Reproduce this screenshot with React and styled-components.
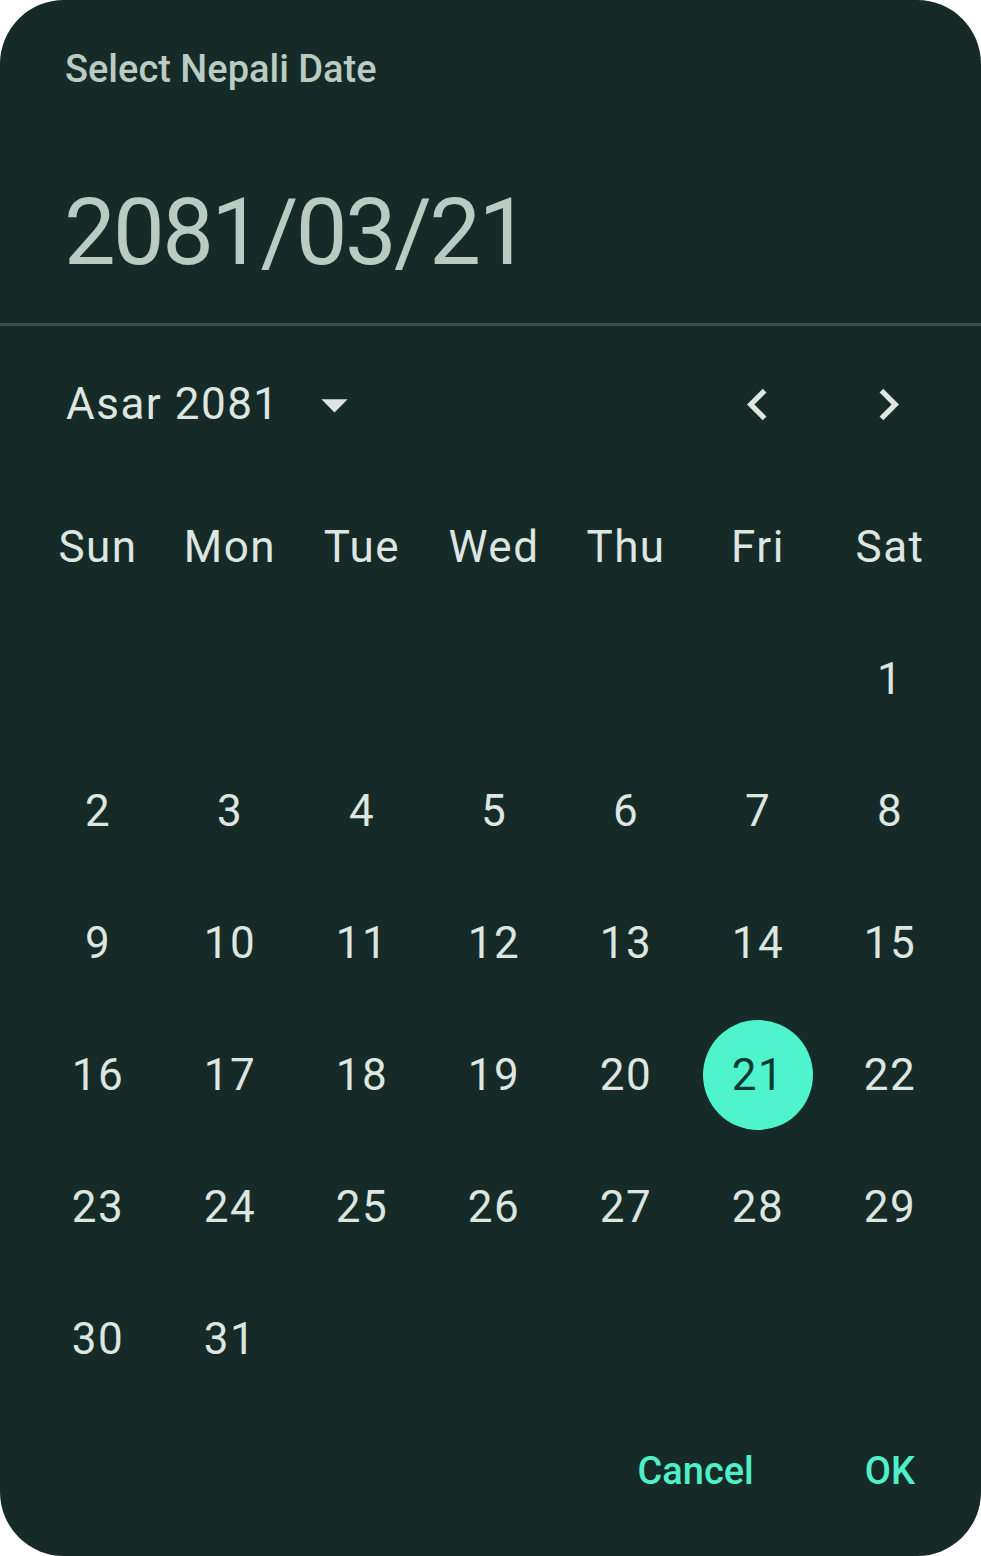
import React from "react";
import styled, { createGlobalStyle } from "styled-components";

const Global = createGlobalStyle`
  html, body { margin: 0; padding: 0; background: #ffffff; }
  body { font-family: Roboto, "Noto Sans", sans-serif; }
`;

const Card = styled.div`
  width: 981px;
  height: 1556px;
  background: #162b27;
  border-radius: 64px;
  display: flex;
  flex-direction: column;
  overflow: hidden;
  font-family: Roboto, "Noto Sans", sans-serif;
`;

const Header = styled.div`
  display: flex;
  flex-direction: column;
  padding: 46px 0 35px 65px;
`;

const Title = styled.div`
  font-size: 38px;
  line-height: 46px;
  font-weight: 500;
  color: #bacbc3;
`;

const BigDate = styled.div`
  margin-top: 86px;
  margin-left: -1px;
  font-size: 92px;
  line-height: 110px;
  font-weight: 400;
  letter-spacing: -2.6px;
  color: #bacbc3;
`;

const Divider = styled.div`
  height: 3px;
  background: #3c4d48;
`;

const MonthRow = styled.div`
  display: flex;
  align-items: center;
  height: 80px;
  margin-top: 38px;
  padding-left: 66px;
`;

const MonthLabel = styled.div`
  font-size: 44px;
  line-height: 52px;
  letter-spacing: 1.5px;
  color: #dde6e1;
`;

const IconBox = styled.div`
  width: 63px;
  height: 63px;
  display: flex;
  align-items: center;
  justify-content: center;
  margin-left: ${(p) => p.$ml || 0}px;
  svg { display: block; }
`;

const Spacer = styled.div`
  flex: ${(p) => (p.$fixed ? `0 0 ${p.$fixed}px` : "1")};
`;

const Grid = styled.div`
  display: grid;
  grid-template-columns: repeat(7, 132px);
  grid-auto-rows: 132px;
  margin-top: 37px;
  padding-left: 32px;
`;

const Cell = styled.div`
  display: flex;
  align-items: center;
  justify-content: center;
  font-size: 44px;
  letter-spacing: 1.5px;
  color: #dde6e1;
`;

const Day = styled.div`
  width: 110px;
  height: 110px;
  border-radius: 50%;
  display: flex;
  align-items: center;
  justify-content: center;
  background: ${(p) => (p.$selected ? "#4ff3cc" : "transparent")};
  color: ${(p) => (p.$selected ? "#0d3a30" : "#dde6e1")};
`;

const Footer = styled.div`
  display: flex;
  justify-content: flex-end;
  align-items: center;
  height: 132px;
  gap: 111px;
  padding-right: 66px;
`;

const TextButton = styled.button`
  background: none;
  border: none;
  padding: 0;
  font-family: Roboto, "Noto Sans", sans-serif;
  font-size: 38px;
  font-weight: 500;
  color: #4ff0c9;
  cursor: pointer;
`;

const Icon = ({ d }) => (
  <svg width="63" height="63" viewBox="0 0 24 24" fill="#dde6e1">
    <path d={d} />
  </svg>
);

const weekdays = ["Sun", "Mon", "Tue", "Wed", "Thu", "Fri", "Sat"];
const startOffset = 6;
const daysInMonth = 31;
const selected = 21;

export default function App() {
  const cells = [];
  for (let i = 0; i < startOffset; i++) cells.push(<Cell key={`e${i}`} />);
  for (let d = 1; d <= daysInMonth; d++) {
    cells.push(
      <Cell key={d}>
        <Day $selected={d === selected}>{d}</Day>
      </Cell>
    );
  }
  return (
    <>
      <Global />
      <Card>
        <Header>
          <Title>Select Nepali Date</Title>
          <BigDate>2081/03/21</BigDate>
        </Header>
        <Divider />
        <MonthRow>
          <MonthLabel>Asar 2081</MonthLabel>
          <IconBox $ml={23}>
            <Icon d="M7 10l5 5 5-5z" />
          </IconBox>
          <Spacer />
          <IconBox>
            <Icon d="M15.41 7.41L14 6l-6 6 6 6 1.41-1.41L10.83 12z" />
          </IconBox>
          <IconBox $ml={68}>
            <Icon d="M10 6L8.59 7.41 13.17 12l-4.58 4.59L10 18l6-6z" />
          </IconBox>
          <Spacer $fixed={61} />
        </MonthRow>
        <Grid>
          {weekdays.map((w) => (
            <Cell key={w}>{w}</Cell>
          ))}
          {cells}
        </Grid>
        <Footer>
          <TextButton>Cancel</TextButton>
          <TextButton>OK</TextButton>
        </Footer>
      </Card>
    </>
  );
}
